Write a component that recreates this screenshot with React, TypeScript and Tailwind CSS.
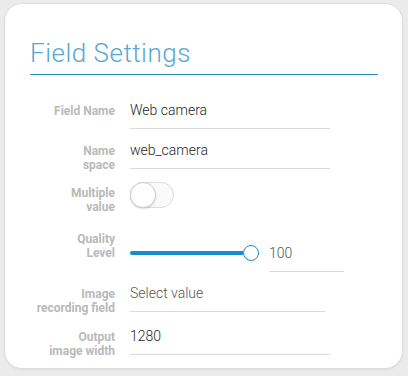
import React from "react";

function Label({ children }: { children: React.ReactNode }) {
  return (
    <div className="w-[85px] shrink-0 mt-[4px] text-right text-[12px] leading-[14px] font-bold text-[#b9b9b9]">
      {children}
    </div>
  );
}

function Value({ children, w = "w-[200px]", muted = false }: { children: React.ReactNode; w?: string; muted?: boolean }) {
  return (
    <div
      className={`${w} h-[29px] border-b border-[#dadada] text-[14px] leading-[20px] font-light ${
        muted ? "text-[#555555]" : "text-[#1f1f1f]"
      }`}
    >
      {children}
    </div>
  );
}

export default function App() {
  return (
    <div className="w-[408px] h-[376px] bg-[#ebebeb] pt-[3px] pl-[4px] font-[Roboto,'Liberation_Sans',sans-serif]">
      <div className="w-[399px] h-[366px] bg-white rounded-[18px] border border-[#dedede] shadow-[0_1px_2px_rgba(0,0,0,0.06)] pl-[25px] pt-[34px]">
        <div className="w-[348px] border-b border-[#2a8cbf] pb-[6px] text-[26px] leading-[30px] tracking-[0.5px] font-light text-[#5aa6d2]">
          Field Settings
        </div>

        <div className="mt-[25px] flex items-start gap-[15px]">
          <Label>Field Name</Label>
          <Value>Web camera</Value>
        </div>

        <div className="mt-[11px] flex items-start gap-[15px]">
          <Label>
            Name
            <br />
            space
          </Label>
          <Value>web_camera</Value>
        </div>

        <div className="mt-[10px] flex items-start gap-[15px]">
          <Label>
            Multiple
            <br />
            value
          </Label>
          <div className="w-[44px] h-[26px] rounded-full border border-[#dcdcdc] bg-[#fafafa] flex items-center">
            <div className="w-[26px] h-[26px] -ml-px rounded-full bg-white border border-[#cfcfcf] shadow-[0_1px_2px_rgba(0,0,0,0.15)]" />
          </div>
        </div>

        <div className="mt-[14px] flex items-start gap-[15px]">
          <Label>
            Quality
            <br />
            Level
          </Label>
          <div className="mt-[15px] flex items-start">
            <div className="h-[20px] flex items-center">
              <div className="w-[113px] h-[4px] rounded-l-full bg-[#178dcf]" />
              <div className="w-[16px] h-[16px] rounded-full bg-white border-[1.5px] border-[#178dcf]" />
            </div>
            <div className="ml-[10px]">
              <Value w="w-[75px]" muted>
                100
              </Value>
            </div>
          </div>
        </div>

        <div className="mt-[11px] flex items-start gap-[15px]">
          <Label>
            Image
            <br />
            recording field
          </Label>
          <Value w="w-[195px]" muted>
            Select value
          </Value>
        </div>

        <div className="mt-[11px] flex items-start gap-[15px]">
          <Label>
            Output
            <br />
            image width
          </Label>
          <Value>1280</Value>
        </div>
      </div>
    </div>
  );
}
